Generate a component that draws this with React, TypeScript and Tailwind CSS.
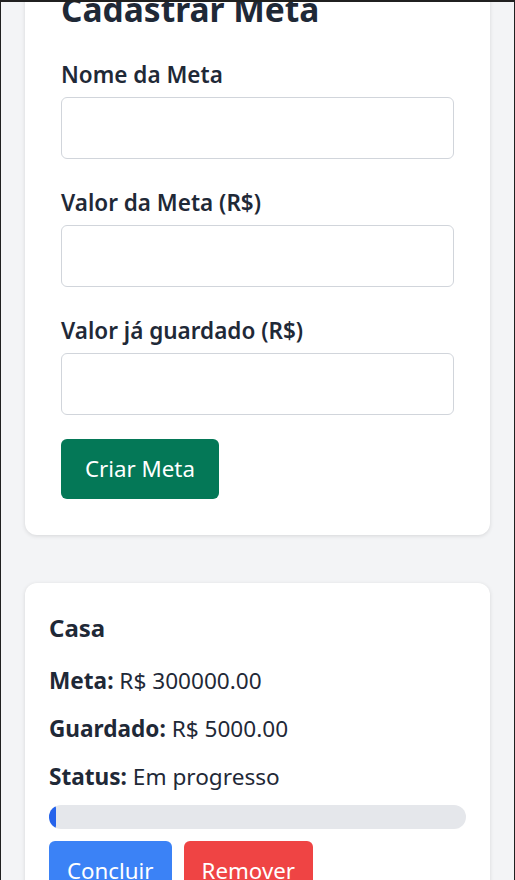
import React from "react";

export default function App() {
  const font = { fontFamily: '"Noto Sans", "Open Sans", sans-serif' };
  return (
    <div
      className="min-h-[880px] h-[880px] overflow-hidden bg-[#f3f4f6] border-t-2 border-l border-r border-[#202020] text-[#1f2937]"
      style={font}
    >
      <div className="px-6 mt-[-49px]">
        <div className="bg-white rounded-xl shadow-[0_1px_4px_rgba(0,0,0,0.12)] p-9">
          <h2 className="text-[33.5px] leading-[40px] font-bold mb-[32px]">Cadastrar Meta</h2>
          <label className="block text-[22.5px] leading-[28px] font-semibold mb-2">Nome da Meta</label>
          <input className="block w-full h-[62px] border border-[#d1d5db] rounded-md mb-[30px] bg-white" />
          <label className="block text-[22.5px] leading-[28px] font-semibold mb-2">Valor da Meta (R$)</label>
          <input className="block w-full h-[62px] border border-[#d1d5db] rounded-md mb-[30px] bg-white" />
          <label className="block text-[22.5px] leading-[28px] font-semibold mb-2">Valor já guardado (R$)</label>
          <input className="block w-full h-[62px] border border-[#d1d5db] rounded-md mb-6 bg-white" />
          <button className="h-[60px] px-6 bg-[#047857] text-white text-[22.3px] rounded-md">Criar Meta</button>
        </div>

        <div className="bg-white rounded-xl shadow-[0_1px_4px_rgba(0,0,0,0.12)] p-6 mt-12">
          <h3 className="text-[24px] leading-[32px] font-bold mt-[5px] mb-[23px]">Casa</h3>
          <p className="text-[22.6px] leading-[28px] mb-5">
            <span className="font-bold">Meta:</span> R$ 300000.00
          </p>
          <p className="text-[22.6px] leading-[28px] mb-5">
            <span className="font-bold">Guardado:</span> R$ 5000.00
          </p>
          <p className="text-[22.6px] leading-[28px] mb-[14px]">
            <span className="font-bold">Status:</span> Em progresso
          </p>
          <div className="h-6 w-full bg-[#e5e7eb] rounded-full overflow-hidden mb-3">
            <div className="h-full bg-[#2563eb] rounded-full" style={{ width: "1.67%" }} />
          </div>
          <div className="flex gap-3">
            <button className="h-[60px] px-[18px] bg-[#3b82f6] text-white text-[22.3px] rounded-md">Concluir</button>
            <button className="h-[60px] px-[18px] bg-[#ef4444] text-white text-[22.3px] rounded-md">Remover</button>
          </div>
        </div>
      </div>
    </div>
  );
}
